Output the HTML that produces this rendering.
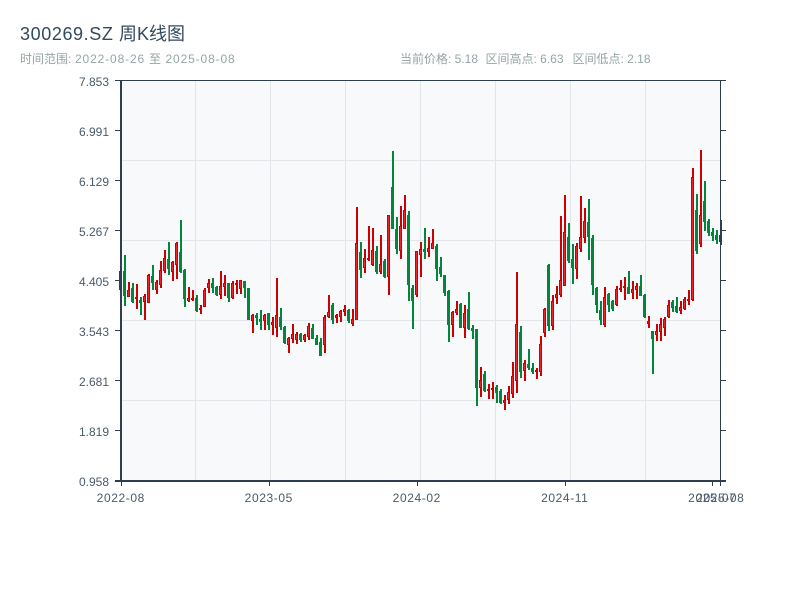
<!DOCTYPE html>
<html><head><meta charset="utf-8"><style>
html,body{margin:0;padding:0;background:#fff;width:800px;height:600px;overflow:hidden}
svg{position:absolute;left:0;top:0;display:block}
text{font-family:"Liberation Sans","Noto Sans CJK SC",sans-serif}
</style></head><body>
<svg width="800" height="600" viewBox="0 0 800 600" xmlns="http://www.w3.org/2000/svg">
<text x="20" y="40" font-size="18" fill="#34495e" letter-spacing="0.6">300269.SZ</text>
<text x="119" y="40" font-size="18" fill="#34495e">周K线图</text>
<text x="20" y="63" font-size="12" fill="#95a5a6">时间范围:</text>
<text x="75" y="63" font-size="12" fill="#95a5a6" letter-spacing="0.87">2022-08-26</text>
<text x="149" y="63" font-size="12" fill="#95a5a6">至</text>
<text x="165.5" y="63" font-size="12" fill="#95a5a6" letter-spacing="0.87">2025-08-08</text>
<text x="400" y="63" font-size="12" fill="#95a5a6">当前价格: 5.18</text>
<text x="485.5" y="63" font-size="12" fill="#95a5a6">区间高点: 6.63</text>
<text x="572.5" y="63" font-size="12" fill="#95a5a6">区间低点: 2.18</text>
<rect x="121" y="81" width="600" height="400" fill="#f8f9fa"/>
<g fill="#e2e6ea" shape-rendering="crispEdges">
<rect x="121" y="160" width="600" height="1"/><rect x="121" y="240" width="600" height="1"/><rect x="121" y="320" width="600" height="1"/><rect x="121" y="400" width="600" height="1"/>
<rect x="195" y="81" width="1" height="400"/><rect x="270" y="81" width="1" height="400"/><rect x="345" y="81" width="1" height="400"/><rect x="420" y="81" width="1" height="400"/><rect x="495" y="81" width="1" height="400"/><rect x="570" y="81" width="1" height="400"/><rect x="645" y="81" width="1" height="400"/>
</g>
<g fill="none" shape-rendering="crispEdges">
<path stroke="#cc0000" stroke-width="2" d="M121 271V290M129 282V297M137 284V309M145 294V320M149 274V303M157 280V294M161 261V288M165 250V273M173 261V281M177 242V279M189 287V302M193 290V301M201 305V314M205 288V307M209 279V293M221 271V299M225 275V296M233 281V299M237 280V294M241 280V294M253 314V333M265 314V330M273 317V335M277 278V337M289 337V353M293 324V343M297 332V344M305 334V342M309 323V340M325 315V353M329 295V318M337 314V323M341 310V322M345 305V316M353 309V326M357 207V320M365 249V273M369 226V261M373 228V266M381 235V274M389 215V295M401 206V259M405 195V229M417 251V297M421 242V277M429 237V257M433 229V249M453 311V337M457 301V315M465 305V338M481 367V397M489 384V399M493 382V399M505 395V410M509 386V404M513 362V398M517 272V393M525 360V381M537 368V379M541 336V376M545 308V337M553 295V330M557 286V304M561 216V297M565 195V286M577 243V279M581 196V252M585 208V243M605 287V327M617 286V306M621 280V292M625 277V300M633 281V299M637 283V299M649 316V328M657 324V341M661 318V341M665 317V336M669 300V318M681 301V314M685 297V310M689 290V305M693 168V301M701 150V247M721 220V245"/>
<path stroke="#cc0000" stroke-width="3" d="M120.5 271V290M128.5 290V297M136.5 297V299M144.5 296V302M148.5 275V303M156.5 282V290M160.5 270V285M164.5 258V271M172.5 262V272M176.5 243V265M188.5 298V301M192.5 298V300M200.5 308V310M204.5 290V307M208.5 283V288M220.5 286V295M224.5 283V287M232.5 283V298M236.5 283V285M240.5 280V289M252.5 315V321M264.5 315V321M272.5 322V325M276.5 315V328M288.5 338V345M292.5 334V339M296.5 334V340M304.5 335V340M308.5 326V337M324.5 317V345M328.5 312V317M336.5 315V318M340.5 311V317M344.5 309V312M352.5 319V324M356.5 243V320M364.5 258V268M368.5 258V260M372.5 250V265M380.5 264V272M388.5 215V277M400.5 226V251M404.5 210V229M416.5 251V295M420.5 249V255M428.5 248V252M432.5 243V249M452.5 312V325M456.5 309V313M464.5 313V328M480.5 380V388M488.5 389V391M492.5 388V390M504.5 400V403M508.5 392V400M512.5 376V394M516.5 324V381M524.5 363V371M536.5 370V372M540.5 344V372M544.5 309V333M552.5 301V326M556.5 294V298M560.5 280V295M564.5 232V286M576.5 246V269M580.5 237V249M584.5 221V238M604.5 297V325M616.5 289V305M620.5 288V290M624.5 286V288M632.5 289V293M636.5 286V290M648.5 321V324M656.5 331V335M660.5 324V332M664.5 319V328M668.5 305V317M680.5 307V311M684.5 299V309M688.5 299V301M692.5 177V300M700.5 215V244M720.5 235V242"/>
<path stroke="#f0222a" stroke-width="1" d="M120.5 272V289M128.5 291V296M144.5 297V301M148.5 276V302M156.5 283V289M160.5 271V284M164.5 259V270M172.5 263V271M176.5 244V264M188.5 299V300M204.5 291V306M208.5 284V287M220.5 287V294M224.5 284V286M232.5 284V297M240.5 281V288M252.5 316V320M264.5 316V320M272.5 323V324M276.5 316V327M288.5 339V344M292.5 335V338M296.5 335V339M304.5 336V339M308.5 327V336M324.5 318V344M328.5 313V316M336.5 316V317M340.5 312V316M344.5 310V311M352.5 320V323M356.5 244V319M364.5 259V267M372.5 251V264M380.5 265V271M388.5 216V276M400.5 227V250M404.5 211V228M416.5 252V294M420.5 250V254M428.5 249V251M432.5 244V248M452.5 313V324M456.5 310V312M464.5 314V327M480.5 381V387M504.5 401V402M508.5 393V399M512.5 377V393M516.5 325V380M524.5 364V370M540.5 345V371M544.5 310V332M552.5 302V325M556.5 295V297M560.5 281V294M564.5 233V285M576.5 247V268M580.5 238V248M584.5 222V237M604.5 298V324M616.5 290V304M632.5 290V292M636.5 287V289M648.5 322V323M656.5 332V334M660.5 325V331M664.5 320V327M668.5 306V316M680.5 308V310M684.5 300V308M692.5 178V299M700.5 216V243M720.5 236V241"/>
<path stroke="#00873c" stroke-width="2" d="M125 255V306M133 283V303M141 297V315M153 265V290M169 242V275M181 220V273M185 269V307M197 295V312M213 278V293M217 286V296M229 283V302M245 281V298M249 288V320M257 313V325M261 310V330M269 313V330M281 308V330M285 326V344M301 333V342M313 324V339M317 335V345M321 338V356M333 303V324M349 309V323M361 242V278M377 246V274M385 259V278M393 151V229M397 217V254M409 211V301M413 285V329M425 228V259M437 244V281M441 257V277M445 275V296M449 290V342M461 303V328M469 292V330M473 325V339M477 329V406M485 371V392M497 385V403M501 389V404M521 326V378M529 349V370M533 363V374M549 264V331M569 223V263M573 244V284M589 199V260M593 235V295M597 287V313M601 301V325M609 293V312M613 300V311M629 271V294M641 275V296M645 294V318M653 331V374M673 300V312M677 297V313M697 194V254M705 181V231M709 219V236M713 228V241M717 230V244"/>
<path stroke="#00873c" stroke-width="3" d="M124.5 271V296M132.5 288V302M140.5 300V303M152.5 276V283M168.5 259V269M180.5 252V272M184.5 270V299M196.5 298V311M212.5 283V288M216.5 287V295M228.5 283V298M244.5 281V288M248.5 288V320M256.5 315V318M260.5 319V322M268.5 313V325M280.5 317V327M284.5 327V343M300.5 334V340M312.5 328V339M316.5 338V345M320.5 342V356M332.5 305V320M348.5 310V321M360.5 252V270M376.5 251V272M384.5 261V277M392.5 187V229M396.5 229V249M408.5 215V285M412.5 288V301M424.5 249V252M436.5 246V269M440.5 267V274M444.5 275V293M448.5 291V325M460.5 304V328M468.5 309V329M472.5 328V331M476.5 329V388M484.5 374V391M496.5 387V393M500.5 391V403M520.5 332V372M528.5 364V368M532.5 368V372M548.5 265V326M568.5 237V261M572.5 259V268M588.5 222V237M592.5 238V285M596.5 288V305M600.5 310V320M608.5 294V305M612.5 301V309M628.5 287V294M640.5 286V296M644.5 295V317M652.5 331V339M672.5 302V308M676.5 306V312M696.5 210V251M704.5 201V222M708.5 221V233M712.5 232V236M716.5 235V240"/>
</g>
<g fill="#2c3e50" shape-rendering="crispEdges">
<rect x="115" y="80" width="611" height="1"/>
<rect x="120" y="80" width="2" height="402"/>
<rect x="115" y="480" width="611" height="2"/>
<rect x="720" y="80" width="1" height="402"/>
<rect x="115" y="130" width="5" height="1"/><rect x="115" y="180" width="5" height="1"/><rect x="115" y="230" width="5" height="1"/><rect x="115" y="280" width="5" height="1"/><rect x="115" y="330" width="5" height="1"/><rect x="115" y="380" width="5" height="1"/><rect x="115" y="430" width="5" height="1"/>
<rect x="721" y="130" width="5" height="1"/><rect x="721" y="180" width="5" height="1"/><rect x="721" y="230" width="5" height="1"/><rect x="721" y="280" width="5" height="1"/><rect x="721" y="330" width="5" height="1"/><rect x="721" y="380" width="5" height="1"/><rect x="721" y="430" width="5" height="1"/>
<rect x="121" y="482" width="1" height="4"/><rect x="269" y="482" width="1" height="4"/><rect x="417" y="482" width="1" height="4"/><rect x="565" y="482" width="1" height="4"/><rect x="712" y="482" width="1" height="4"/><rect x="720" y="482" width="1" height="4"/>
</g>
<g font-size="12" fill="#4a5a6a" text-anchor="end">
<text x="109" y="86">7.853</text><text x="109" y="136">6.991</text><text x="109" y="186">6.129</text><text x="109" y="236">5.267</text><text x="109" y="286">4.405</text><text x="109" y="336">3.543</text><text x="109" y="386">2.681</text><text x="109" y="436">1.819</text><text x="109" y="486">0.958</text>
</g>
<g font-size="12" fill="#4a5a6a" text-anchor="middle" letter-spacing="0.6">
<text x="120.8" y="502">2022-08</text><text x="268.8" y="502">2023-05</text><text x="416.8" y="502">2024-02</text><text x="564.8" y="502">2024-11</text><text x="712.3" y="502">2025-07</text><text x="720.3" y="502">2025-08</text>
</g>
</svg>
</body></html>
